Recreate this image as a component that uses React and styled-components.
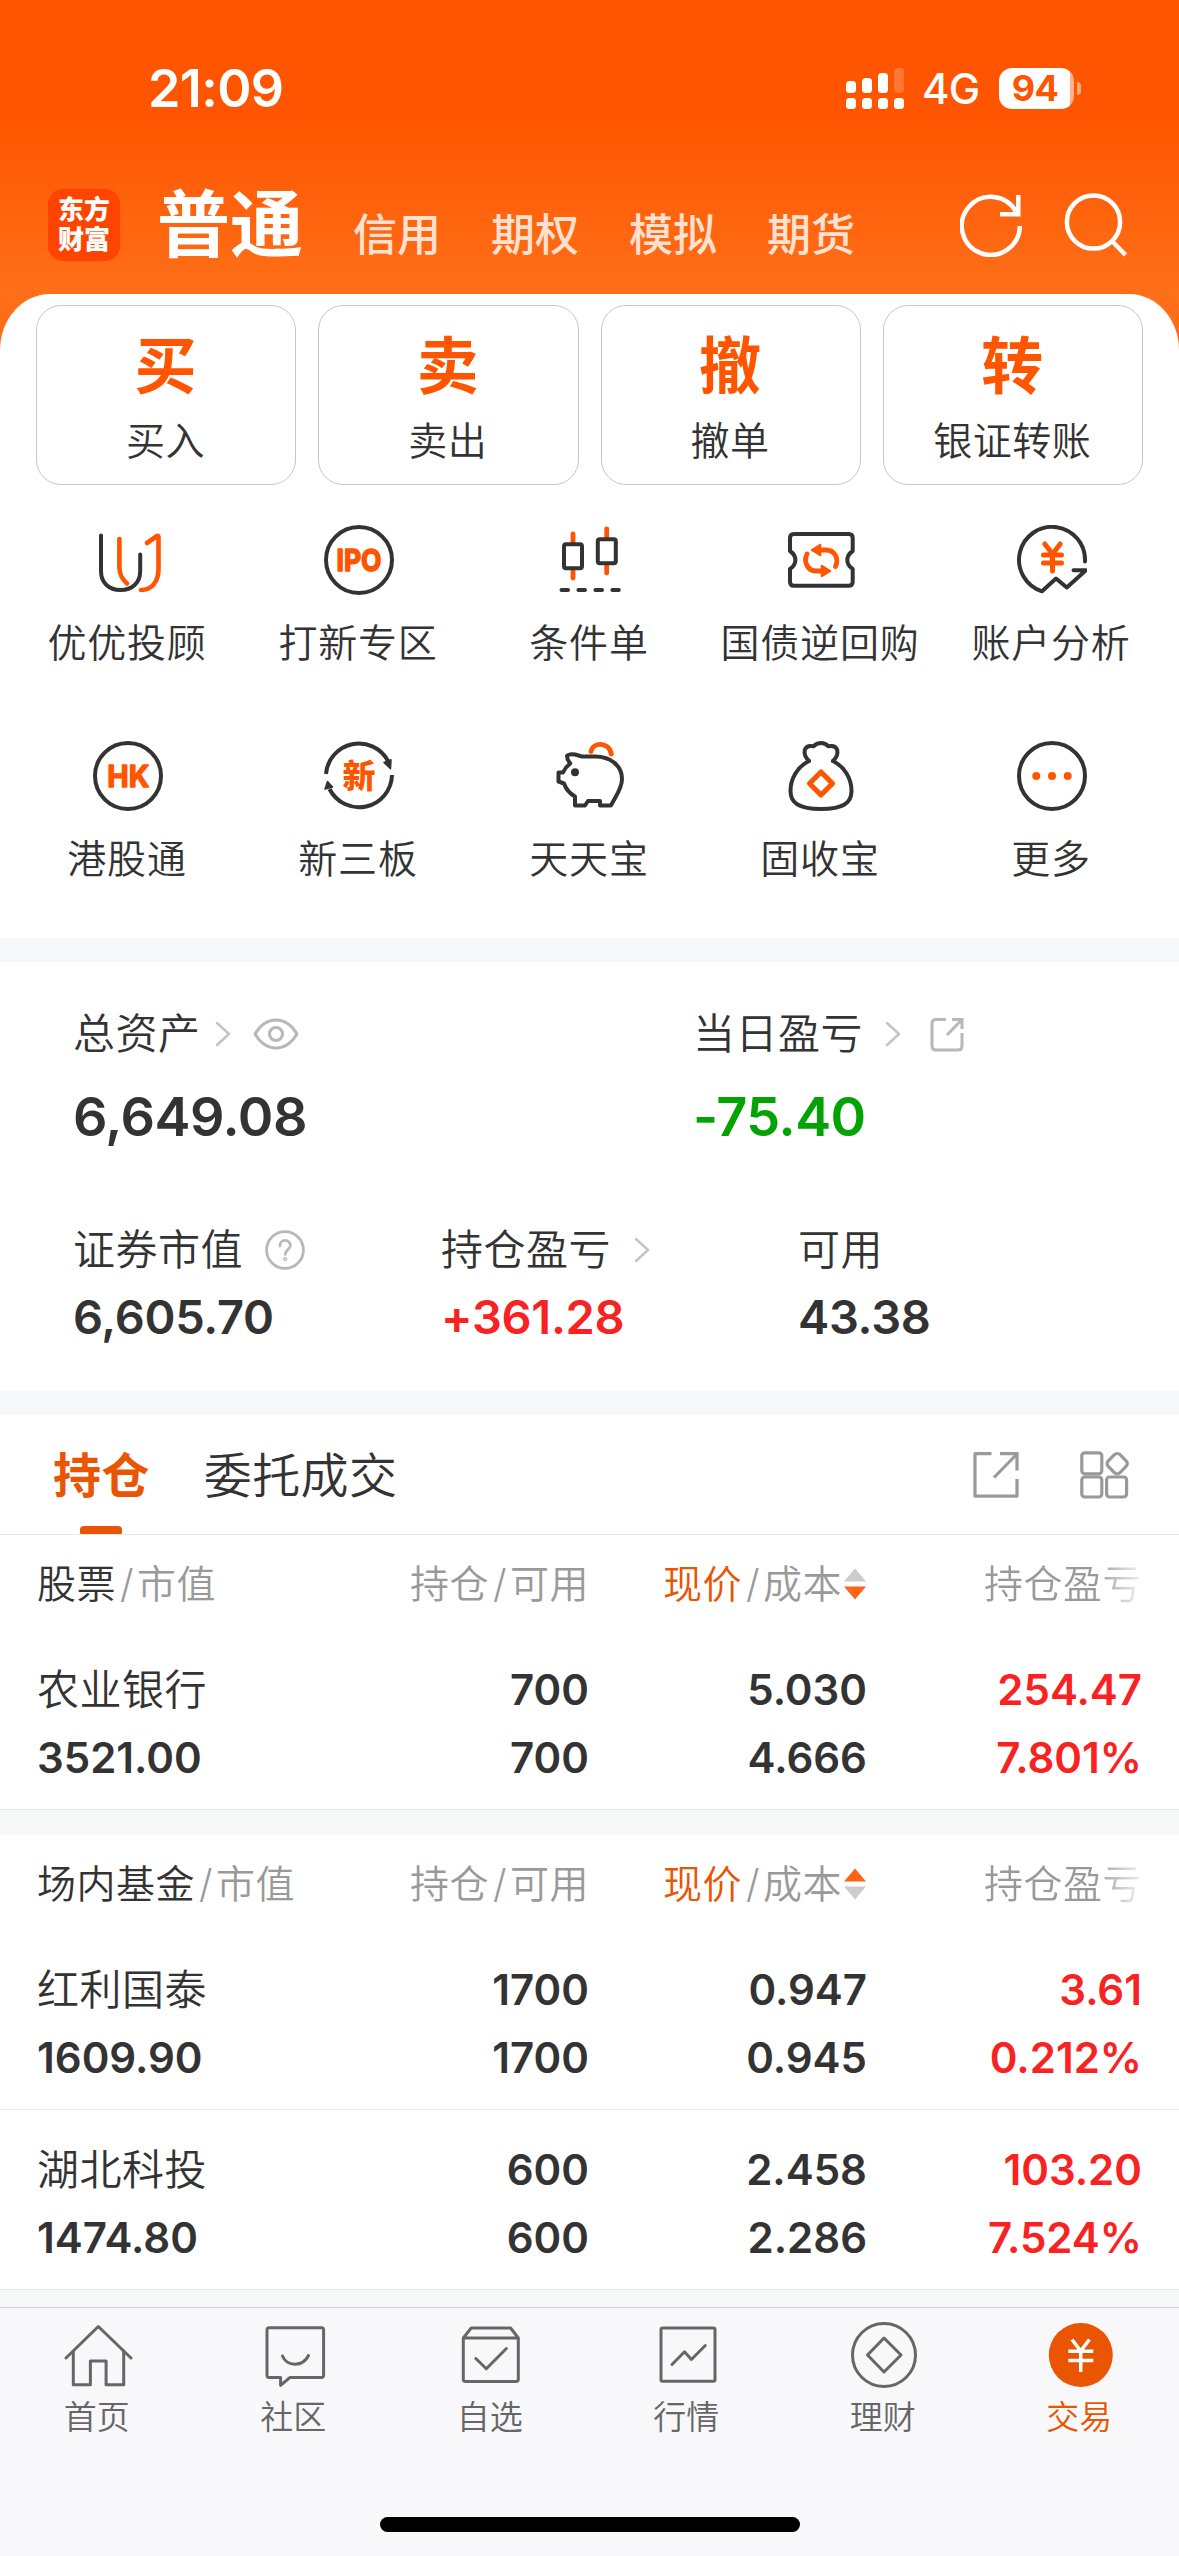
import React from 'react';
import styled, { createGlobalStyle } from 'styled-components';

const ORANGE = '#ff5500';
const DEEP_ORANGE = '#ea5504';
const DARK = '#333333';
const GRAY = '#999999';
const RED = '#f92222';
const GREEN = '#03a303';

const GlobalStyle = createGlobalStyle`
  body {
    margin: 0;
    background: #f8f8fb;
  }

  * {
    box-sizing: border-box;
  }
`;

const Page = styled.div`
  width: 1179px;
  height: 2556px;
  overflow: hidden;
  display: flex;
  flex-direction: column;
  color: ${DARK};
  font-family: Inter, "Noto Sans CJK SC", sans-serif;
  font-weight: 350;
  background: linear-gradient(#ff5500 115px, #ff6f19 294px, #ff6a12 340px);
  white-space: nowrap;
`;

const Icon = styled.svg`
  display: block;
  flex: none;
  fill: none;
  stroke: ${props => props.$color || DARK};
  stroke-width: ${props => props.$stroke || 4};
  stroke-linecap: round;
  stroke-linejoin: round;
`;

/* status bar */

const StatusBar = styled.div`
  height: 176px;
  padding: 0 98px 0 148px;
  display: flex;
  align-items: center;
  color: #fff;
`;

const Clock = styled.div`
  flex: 1;
  font-size: 52px;
  font-weight: 600;
  letter-spacing: -0.6px;
`;

const Network = styled.div`
  margin: 1px 19px 0 18px;
  width: 58px;
  font-size: 42px;
  font-weight: 450;
  letter-spacing: -0.8px;
`;

const Battery = styled.div`
  width: 75px;
  height: 41px;
  border-radius: 13px;
  padding-right: 3px;
  background: linear-gradient(90deg, #fff 71px, #ffb38c 71px);
  color: ${ORANGE};
  font-size: 36px;
  font-weight: 700;
  line-height: 41px;
  text-align: center;
  letter-spacing: -0.5px;
`;

const BatteryTip = styled.div`
  margin-left: 3px;
  width: 4px;
  height: 13px;
  border-radius: 0 5px 5px 0;
  background: #ffab80;
`;

/* account switcher */

const AccountBar = styled.div`
  height: 98px;
  margin-bottom: 20px;
  padding: 0 51px 0 48px;
  display: flex;
  align-items: center;
`;

const Logo = styled.div`
  width: 72px;
  height: 72px;
  padding-top: 6px;
  border-radius: 15px;
  background: #ff4400;
  color: #fff;
  font-size: 26px;
  font-weight: 900;
  line-height: 30px;
  text-align: center;
`;

const Accounts = styled.div`
  flex: 1;
  margin-left: 37px;
  padding-top: 9px;
  display: flex;
  align-items: baseline;
  line-height: 98px;
`;

const Account = styled.div`
  margin-right: ${props => (props.$active ? 50 : 50)}px;
  color: ${props => (props.$active ? '#fff' : '#ffe1d1')};
  font-size: ${props => (props.$active ? 73 : 44)}px;
  font-weight: ${props => (props.$active ? 700 : 500)};
`;

/* white content */

const Content = styled.div`
  border-radius: 50px 50px 0 0 / 56px 56px 0 0;
  background: #fff;
`;

const Actions = styled.div`
  padding: 11px 36px 0;
  display: grid;
  grid-template-columns: repeat(4, 1fr);
  gap: 22px;
`;

const Action = styled.div`
  height: 180px;
  padding: 26px 1px 0 0;
  border: 1px solid #c6c6c6;
  border-radius: 25px;
  display: flex;
  flex-direction: column;
  align-items: center;
`;

const ActionMark = styled.div`
  color: ${ORANGE};
  font-size: 62px;
  font-weight: 700;
  line-height: 70px;
`;

const ActionName = styled.div`
  margin-top: 11px;
  font-size: 39px;
  line-height: 56px;
  letter-spacing: 0.5px;
`;

const Services = styled.div`
  height: 453px;
  padding: 40px 12px 0;
  display: grid;
  grid-template-columns: repeat(5, 231px);
  grid-auto-rows: 216px;
`;

const Service = styled.div`
  display: flex;
  flex-direction: column;
  align-items: center;
`;

const ServiceName = styled.div`
  margin-top: 18px;
  padding-right: 1px;
  font-size: 39px;
  line-height: 60px;
  letter-spacing: 0.8px;
`;

const Gap = styled.div`
  height: ${props => props.$height || 24}px;
  background: #f6f8fa;
`;

/* assets */

const Assets = styled.div`
  height: 429px;
  padding: 42px 0 0 73px;
`;

const AssetRow = styled.div`
  display: grid;
  grid-template-columns: ${props => props.$columns};
  margin-bottom: 73px;
`;

const AssetLabel = styled.div`
  display: flex;
  align-items: center;
  font-size: 42px;
  line-height: 60px;
  letter-spacing: 0.5px;
`;

const AssetValue = styled.div`
  margin-top: ${props => (props.$large ? 23 : 7)}px;
  color: ${props => props.$color || DARK};
  font-size: ${props => (props.$large ? 54 : 47)}px;
  font-weight: 600;
  line-height: 60px;
  letter-spacing: ${props => (props.$large ? -0.5 : -0.3)}px;
`;

const IconSlot = styled.span`
  margin-left: ${props => props.$space}px;
`;

/* positions */

const Tabs = styled.div`
  height: 120px;
  padding: 0 50px 0 53px;
  border-bottom: 1px solid #e8e8e8;
  display: flex;
`;

const Tab = styled.div`
  height: 119px;
  margin-right: 54px;
  display: flex;
  flex-direction: column;
  align-items: center;
  justify-content: space-between;
  color: ${props => (props.$active ? DEEP_ORANGE : DARK)};
  font-size: 48px;
  font-weight: ${props => (props.$active ? 600 : 350)};
  line-height: 122px;
  letter-spacing: 0.4px;
`;

const TabName = styled.div`
  height: 111px;
`;

const TabMark = styled.div`
  width: 42px;
  height: 8px;
  border-radius: 4px 4px 1px 1px;
  background: ${DEEP_ORANGE};
`;

const TabTools = styled.div`
  flex: 1;
  display: flex;
  align-items: center;
  justify-content: flex-end;
  gap: 61px;
`;

const Columns = styled.div`
  padding: 0 37px;
  display: grid;
  grid-template-columns: 251px 301px 278px 275px;
`;

const HeadRow = styled(Columns)`
  height: 95px;
  color: ${GRAY};
  font-size: 39px;
  line-height: 97px;
  letter-spacing: 0.5px;
`;

const HeadCell = styled.div`
  display: flex;
  justify-content: ${props => (props.$left ? 'flex-start' : 'flex-end')};
  align-items: center;
`;

const Em = styled.span`
  color: ${props => props.$color};
`;

const Slash = styled.span`
  padding: 0 3px 0 4px;
`;

const Fade = styled.span`
  background: linear-gradient(90deg, ${GRAY} 70%, rgba(153, 153, 153, 0) 104%);
  background-clip: text;
  -webkit-background-clip: text;
  color: transparent;
`;

const Row = styled(Columns)`
  height: 180px;
  padding-top: 26px;
  border-bottom: 1px solid #e8e8e8;
`;

const Cell = styled.div`
  color: ${props => props.$color || DARK};
  font-size: 42px;
  font-weight: 600;
  line-height: 68px;
  text-align: ${props => (props.$left ? 'left' : 'right')};
`;

const StockName = styled.div`
  font-weight: 350;
  letter-spacing: 0.5px;
`;

/* bottom bar */

const TabBar = styled.div`
  height: 249px;
  border-top: 1px solid #d2d2d4;
  background: #f8f8fb;
  display: flex;
  flex-direction: column;
  align-items: center;
`;

const TabItems = styled.div`
  width: 100%;
  height: 209px;
  padding-top: 12px;
  display: grid;
  grid-template-columns: repeat(6, 1fr);
`;

const TabItem = styled.div`
  display: flex;
  flex-direction: column;
  align-items: center;
  color: ${props => (props.$active ? DEEP_ORANGE : '#666666')};
`;

const TabItemName = styled.div`
  padding-right: 3px;
  font-size: 33px;
  line-height: 54px;
`;

const HomeIndicator = styled.div`
  width: 420px;
  height: 15px;
  border-radius: 8px;
  background: #000;
`;

const MarkText = styled.text`
  fill: ${ORANGE};
  stroke: ${ORANGE};
  stroke-width: ${props => props.$bold || 0};
  font-weight: ${props => props.$weight || 700};
  font-size: ${props => props.$size}px;
  text-anchor: middle;
`;

const Box70 = ({ children, ...rest }) => (
  <Icon width="70" height="70" viewBox="0 0 70 70" {...rest}>{children}</Icon>
);

const Signal = () => (
  <Icon width="58" height="41" viewBox="0 0 58 41">
    <g fill="#fff" stroke="none">
      <rect x="0" y="13" width="10" height="12" rx="3.5" />
      <rect x="16" y="10" width="10" height="15" rx="3.5" />
      <rect x="32" y="5" width="10" height="20" rx="3.5" />
      <rect x="48" y="0" width="10" height="25" rx="3.5" opacity=".2" />
      <rect x="0" y="30" width="10" height="11" rx="3.5" />
      <rect x="16" y="30" width="10" height="11" rx="3.5" />
      <rect x="32" y="30" width="10" height="11" rx="3.5" />
      <rect x="48" y="30" width="10" height="11" rx="3.5" />
    </g>
  </Icon>
);

const RefreshIcon = () => (
  <Icon width="62" height="64" viewBox="0 0 62 64" $color="#fff" $stroke={4.5}>
    <path strokeLinecap="butt" d="M59.8 33A29 29 0 1 1 56 18.5" />
    <path strokeLinecap="butt" strokeLinejoin="miter" d="M58.3 2V21.2H40" />
  </Icon>
);

const SearchIcon = () => (
  <Icon width="64" height="64" viewBox="0 0 64 64" $color="#fff" $stroke={4.5}>
    <circle cx="29.5" cy="29" r="26.6" />
    <path strokeLinecap="butt" d="M48 48L61.5 62" />
  </Icon>
);

const Chevron = () => (
  <Icon width="16" height="26" viewBox="0 0 16 26" $color="#c4c4c4" $stroke={2.5}>
    <path d="M2 2L14 13L2 24" />
  </Icon>
);

const EyeIcon = () => (
  <Icon width="46" height="32" viewBox="0 0 46 32" $color="#b8b8b8" $stroke={3}>
    <path d="M2 16C8 6 15 2 23 2S38 6 44 16C38 26 31 30 23 30S8 26 2 16Z" />
    <circle cx="23" cy="16" r="6.5" />
  </Icon>
);

const HelpIcon = () => (
  <Icon width="40" height="40" viewBox="0 0 40 40" $color="#b8b8b8" $stroke={2.8}>
    <circle cx="20" cy="20" r="18.4" />
    <path d="M14.8 16.2C14.8 8.5 25.4 8.8 25.4 15.6C25.4 19.6 20.2 19.8 20.2 24.4" />
    <circle cx="20.2" cy="29" r=".7" />
  </Icon>
);

const SmallShare = () => (
  <Icon width="34" height="35" viewBox="0 0 34 35" $color="#b8b8b8" $stroke={3}>
    <path strokeLinecap="butt" d="M16 2.5H6Q2 2.5 2 6.5V29Q2 33 6 33H28Q32 33 32 29V16" />
    <path strokeLinecap="butt" strokeLinejoin="miter" d="M22 2.5H32V12M31.5 3L17 18" />
  </Icon>
);

const ShareIcon = () => (
  <Icon width="46" height="46" viewBox="0 0 46 46" $color={GRAY} $stroke={3.2}>
    <path strokeLinecap="butt" d="M18.5 1.7H2V44.2H44V27" />
    <path strokeLinecap="butt" strokeLinejoin="miter" d="M27 1.7H44V18.5M43.5 2.5L21 25.5" />
  </Icon>
);

const BlocksIcon = () => (
  <Icon width="49" height="48" viewBox="0 0 49 48" $color={GRAY} $stroke={3.2}>
    <rect x="1.8" y="1.8" width="20" height="21" rx="3" />
    <rect x="1.8" y="26" width="20" height="20" rx="3" />
    <rect x="26.6" y="26" width="20" height="20" rx="3" />
    <rect x="28.9" y="4.3" width="16.6" height="16.6" rx="4" transform="rotate(45 37.2 12.6)" />
  </Icon>
);

const SortArrows = ({ up }) => (
  <Icon width="24" height="32" viewBox="0 0 24 32">
    <path stroke="none" fill={up ? '#ff6315' : '#cccccc'} d="M12 .5L23 13.5H1Z" />
    <path stroke="none" fill={up ? '#cccccc' : '#ff6315'} d="M12 31.5L23 18.5H1Z" />
  </Icon>
);

const serviceIcons = {
  advisor: (
    <Box70>
      <path d="M8 10.5V46C8 58 16 65 27.5 65S47.2 58 47.2 46V29.5" />
      <g stroke={ORANGE}>
        <path strokeWidth="4.6" d="M26.4 14V42C26.4 50 29 54 34 58.5" />
        <path strokeWidth="4.6" d="M54 18L64 11Q65.5 10.5 65.5 12.5V44C65.5 57 58.5 65 48 65" />
      </g>
    </Box70>
  ),
  ipo: (
    <Box70>
      <circle cx="35" cy="35" r="33" />
      <MarkText x="35" y="46" $size={30} $bold={1.6} textLength="45" lengthAdjust="spacingAndGlyphs">IPO</MarkText>
    </Box70>
  ),
  condition: (
    <Box70>
      <path stroke={ORANGE} strokeWidth="4.8" d="M18 9V17M18 46V53M51.7 4V12M51.7 41V48" />
      <rect x="9" y="19.3" width="18" height="24" rx="2" />
      <rect x="42.8" y="14.3" width="18" height="24" rx="2" />
      <path d="M6.5 65H13M23.4 65H30M40.4 65H47M57.4 65H63.8" />
    </Box70>
  ),
  repo: (
    <Box70>
      <path d="M4 26V13Q4 9 8 9H62.7Q66.7 9 66.7 13V26C59.5 31 59.5 39 66.7 44V56.7Q66.7 60.7 62.7 60.7H8Q4 60.7 4 56.7V44C11.2 39 11.2 31 4 26Z" />
      <g stroke={ORANGE} strokeWidth="4.8">
        <path d="M34 25H40C48 25 53.5 33 49.5 41.5" />
        <path d="M21 29C17 37 22 46 30 46H36" />
        <path fill={ORANGE} strokeWidth="1.5" d="M25.5 25L34.5 19.5V30.5Z" />
        <path fill={ORANGE} strokeWidth="1.5" d="M44.5 46L35.5 40.5V51.5Z" />
      </g>
    </Box70>
  ),
  analysis: (
    <Box70>
      <path d="M68 36.5A33 33 0 1 0 25 66.3L39 53.5L49.8 62.5L69 45.3H56.5" />
      <path stroke={ORANGE} strokeWidth="5" d="M27.8 19L35.5 29L43.2 19M26.5 30H44.5M26.5 38H44.5M35.5 29V46" />
    </Box70>
  ),
  hk: (
    <Box70>
      <circle cx="35" cy="35" r="33" />
      <MarkText x="35.3" y="46" $size={30} $bold={1.4} textLength="42" lengthAdjust="spacingAndGlyphs">HK</MarkText>
    </Box70>
  ),
  newBoard: (
    <Box70>
      <path strokeLinecap="butt" d="M2 33A33 33 0 0 1 64 20M68 34A33 33 0 0 1 5.5 48" />
      <path fill={DARK} strokeWidth="1.5" d="M60 21.5L67 18.8L66.5 27.8ZM1 48L8.5 46L3.5 40.5Z" />
      <MarkText x="35" y="47" $size={33} $weight={900}>新</MarkText>
    </Box70>
  ),
  piggy: (
    <Box70>
      <path d="M3.5 31.5H8Q10.5 26 15.3 22.5Q12 19 12 15Q14 12.5 20 13.5L27 15.5H40C56 15.5 67 25 67 38C67 48 60 56 56 64.5H45V60H33L30 64.5H20V55.5Q12 51 9 42.5L3.5 40.5Z" />
      <circle cx="20" cy="31.3" r="4" fill={DARK} stroke="none" />
      <path stroke={ORANGE} strokeWidth="4.8" d="M36 10.5C38 .5 54 .5 56.3 13" />
    </Box70>
  ),
  bag: (
    <Box70>
      <path d="M23 20C11 26 4.5 38 4.5 50C4.5 62 13 68 35 68S65.5 62 65.5 50C65.5 38 59 26 47 20" />
      <path d="M23 20Q17.5 15 18.8 9Q20.5 4 27.5 5.3Q30.5 2 35 2T42.5 5.3Q49.5 4 51.2 9Q52.5 15 47 20" />
      <path stroke={ORANGE} strokeWidth="5.2" d="M35 31L46.5 42.5L35 54L23.5 42.5Z" />
    </Box70>
  ),
  more: (
    <Box70>
      <circle cx="35" cy="35" r="33" />
      <g fill={ORANGE} stroke="none">
        <circle cx="19.3" cy="35" r="4" />
        <circle cx="35" cy="35" r="4" />
        <circle cx="50.7" cy="35" r="4" />
      </g>
    </Box70>
  ),
};

const tabIcons = {
  home: (
    <Box70 $color="#666" $stroke={3}>
      <path d="M3 38L35.3 6.5L68 38" />
      <path d="M10.3 31V64.7H27.4V41H43.1V64.7H60.7V31" />
    </Box70>
  ),
  community: (
    <Box70 $color="#666" $stroke={3}>
      <path d="M9 7.8H61.5Q63.6 7.8 63.6 10V55.3Q63.6 57.4 61.5 57.4H30L20.6 65.3V57.4H9Q7 57.4 7 55.3V10Q7 7.8 9 7.8Z" />
      <path d="M22.5 36C27 47 43 47 48.5 35.5" />
    </Box70>
  ),
  watchlist: (
    <Box70 $color="#666" $stroke={3}>
      <path d="M7.3 18L15.2 8H54.6L62.3 18V59.5Q62.3 61.4 60 61.4H9.5Q7.3 61.4 7.3 59.5ZM7.3 18H62.3" />
      <path d="M19.8 38.5L30.3 48.8L50.4 28.5" />
    </Box70>
  ),
  market: (
    <Box70 $color="#666" $stroke={3}>
      <rect x="8" y="8" width="54" height="53.3" rx="1.5" />
      <path d="M19 44.5L31.5 31.8L38.4 39.5L52.3 25.5" />
    </Box70>
  ),
  wealth: (
    <Box70 $color="#666" $stroke={3}>
      <circle cx="35" cy="35" r="31.5" />
      <path d="M35 18L52 35L35 52L18.5 35Z" />
    </Box70>
  ),
  trade: (
    <Box70 $color="#fff" $stroke={3.5}>
      <circle cx="34.8" cy="35" r="32" fill={DEEP_ORANGE} stroke="none" />
      <path strokeLinecap="butt" d="M26 19.5L34.7 31L43.4 19.5M22.3 31.3H47.3M22.3 40.4H47.3M34.7 31V52" />
    </Box70>
  ),
};

const actions = [
  { mark: '买', name: '买入' },
  { mark: '卖', name: '卖出' },
  { mark: '撤', name: '撤单' },
  { mark: '转', name: '银证转账' },
];

const services = [
  { icon: 'advisor', name: '优优投顾' },
  { icon: 'ipo', name: '打新专区' },
  { icon: 'condition', name: '条件单' },
  { icon: 'repo', name: '国债逆回购' },
  { icon: 'analysis', name: '账户分析' },
  { icon: 'hk', name: '港股通' },
  { icon: 'newBoard', name: '新三板' },
  { icon: 'piggy', name: '天天宝' },
  { icon: 'bag', name: '固收宝' },
  { icon: 'more', name: '更多' },
];

const stocks = [
  { name: '农业银行', value: '3521.00', held: '700', free: '700', price: '5.030', cost: '4.666', profit: '254.47', rate: '7.801%' },
];

const funds = [
  { name: '红利国泰', value: '1609.90', held: '1700', free: '1700', price: '0.947', cost: '0.945', profit: '3.61', rate: '0.212%' },
  { name: '湖北科投', value: '1474.80', held: '600', free: '600', price: '2.458', cost: '2.286', profit: '103.20', rate: '7.524%' },
];

const tabs = [
  { icon: 'home', name: '首页' },
  { icon: 'community', name: '社区' },
  { icon: 'watchlist', name: '自选' },
  { icon: 'market', name: '行情' },
  { icon: 'wealth', name: '理财' },
  { icon: 'trade', name: '交易' },
];

const Positions = ({ title, items, up }) => (
  <div>
    <HeadRow>
      <HeadCell $left><Em $color={DARK}>{title}</Em><Slash>/</Slash>市值</HeadCell>
      <HeadCell>持仓<Slash>/</Slash>可用</HeadCell>
      <HeadCell>
        <Em $color={DEEP_ORANGE}>现价</Em><Slash>/</Slash>成本
        <IconSlot $space={1}><SortArrows up={up} /></IconSlot>
      </HeadCell>
      <HeadCell><Fade>持仓盈亏</Fade></HeadCell>
    </HeadRow>
    {items.map(item => (
      <Row key={item.name}>
        <Cell $left>
          <StockName>{item.name}</StockName>
          {item.value}
        </Cell>
        <Cell>{item.held}<br />{item.free}</Cell>
        <Cell>{item.price}<br />{item.cost}</Cell>
        <Cell $color={RED}>{item.profit}<br />{item.rate}</Cell>
      </Row>
    ))}
  </div>
);

export default function App() {
  return (
    <Page>
      <GlobalStyle />
      <StatusBar>
        <Clock>21:09</Clock>
        <Signal />
        <Network>4G</Network>
        <Battery>94</Battery>
        <BatteryTip />
      </StatusBar>
      <AccountBar>
        <Logo>东方<br />财富</Logo>
        <Accounts>
          <Account $active>普通</Account>
          <Account>信用</Account>
          <Account>期权</Account>
          <Account>模拟</Account>
          <Account>期货</Account>
        </Accounts>
        <RefreshIcon />
        <IconSlot $space={42}><SearchIcon /></IconSlot>
      </AccountBar>

      <Content>
        <Actions>
          {actions.map(action => (
            <Action key={action.name}>
              <ActionMark>{action.mark}</ActionMark>
              <ActionName>{action.name}</ActionName>
            </Action>
          ))}
        </Actions>
        <Services>
          {services.map(service => (
            <Service key={service.name}>
              {serviceIcons[service.icon]}
              <ServiceName>{service.name}</ServiceName>
            </Service>
          ))}
        </Services>

        <Gap />
        <Assets>
          <AssetRow $columns="620px 1fr">
            <div>
              <AssetLabel>
                总资产
                <IconSlot $space={14}><Chevron /></IconSlot>
                <IconSlot $space={22}><EyeIcon /></IconSlot>
              </AssetLabel>
              <AssetValue $large>6,649.08</AssetValue>
            </div>
            <div>
              <AssetLabel>
                当日盈亏
                <IconSlot $space={22}><Chevron /></IconSlot>
                <IconSlot $space={29}><SmallShare /></IconSlot>
              </AssetLabel>
              <AssetValue $large $color={GREEN}>-75.40</AssetValue>
            </div>
          </AssetRow>
          <AssetRow $columns="368px 357px 1fr">
            <div>
              <AssetLabel>
                证券市值
                <IconSlot $space={22}><HelpIcon /></IconSlot>
              </AssetLabel>
              <AssetValue>6,605.70</AssetValue>
            </div>
            <div>
              <AssetLabel>
                持仓盈亏
                <IconSlot $space={23}><Chevron /></IconSlot>
              </AssetLabel>
              <AssetValue $color={RED}>+361.28</AssetValue>
            </div>
            <div>
              <AssetLabel>可用</AssetLabel>
              <AssetValue>43.38</AssetValue>
            </div>
          </AssetRow>
        </Assets>

        <Gap />
        <Tabs>
          <Tab $active>
            <TabName>持仓</TabName>
            <TabMark />
          </Tab>
          <Tab>
            <TabName>委托成交</TabName>
          </Tab>
          <TabTools>
            <ShareIcon />
            <BlocksIcon />
          </TabTools>
        </Tabs>
        <Positions title="股票" items={stocks} />
        <Gap $height={25} />
        <Positions title="场内基金" items={funds} up />
        <Gap $height={17} />
      </Content>

      <TabBar>
        <TabItems>
          {tabs.map(tab => (
            <TabItem key={tab.name} $active={tab.icon === 'trade'}>
              {tabIcons[tab.icon]}
              <TabItemName>{tab.name}</TabItemName>
            </TabItem>
          ))}
        </TabItems>
        <HomeIndicator />
      </TabBar>
    </Page>
  );
}
